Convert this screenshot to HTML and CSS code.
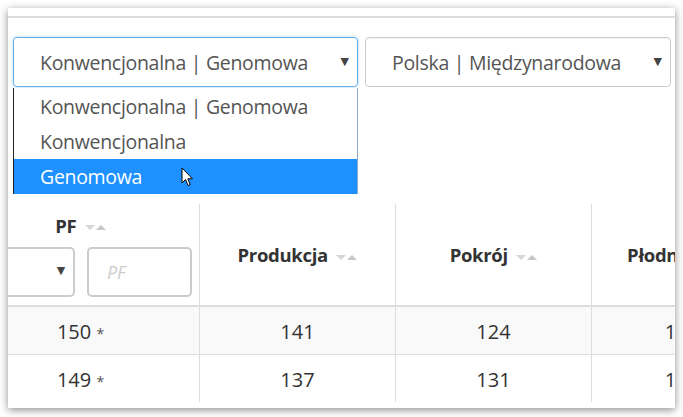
FILE: index.html
```html
<html><head>
<meta charset="UTF-8">
<title>Ranking</title>
<link rel="stylesheet" href="styles.css">
</head>
<body>
  <div class="window">
    <div class="topbar"></div>

    <div class="filters">
      <div class="select focused">
        <span class="select-text">Konwencjonalna | Genomowa</span>
        <span class="caret">&#9660;</span>
      </div>
      <div class="select">
        <span class="select-text">Polska | Międzynarodowa</span>
        <span class="caret">&#9660;</span>
      </div>

      <ul class="dropdown">
        <li>Konwencjonalna | Genomowa</li>
        <li>Konwencjonalna</li>
        <li class="active">Genomowa
          <svg class="cursor" width="13" height="20" viewBox="0 0 13 20">
            <path d="M1 1 L1 16 L4.5 12.5 L7 18.5 L9.2 17.6 L6.8 11.8 L11.5 11.8 Z" fill="#fff" stroke="#000" stroke-width="1" stroke-linejoin="round"/>
          </svg>
        </li>
      </ul>
    </div>

    <div class="table-wrap">
      <table class="ranking">
        <thead>
          <tr>
            <th class="col-pf">
              <div class="th-title">PF <span class="sort"><i class="down"></i><i class="up"></i></span></div>
              <div class="th-filters">
                <div class="mini-select"><span class="caret">&#9660;</span></div>
                <div class="mini-input">PF</div>
              </div>
            </th>
            <th>Produkcja <span class="sort"><i class="down"></i><i class="up"></i></span></th>
            <th>Pokrój <span class="sort"><i class="down"></i><i class="up"></i></span></th>
            <th class="col-narrow">Płodność <span class="sort"><i class="down"></i><i class="up"></i></span></th>
          </tr>
        </thead>
        <tbody>
          <tr class="odd">
            <td class="col-pf">150 <span class="star">*</span></td>
            <td>141</td>
            <td>124</td>
            <td>118</td>
          </tr>
          <tr>
            <td class="col-pf">149 <span class="star">*</span></td>
            <td>137</td>
            <td>131</td>
            <td>112</td>
          </tr>
        </tbody>
      </table>
    </div>
  </div>
</body></html>
```

FILE: styles.css
```css
:root {
  --text-color: #555;
  --head-color: #333;
  --line-color: #ddd;
  --focus-color: #66afe9;
  --active-color: #1e90ff;
}

body {
  margin: 0;
  background: #fff;
  font-family: 'Open Sans', 'DejaVu Sans', sans-serif;
  color: var(--text-color);
}

.window {
  margin: 8px;
  width: 667px;
  height: 400px;
  background: #fff;
  box-shadow: 0 2px 8px rgba(0, 0, 0, 0.45);
  overflow: hidden;
  position: relative;
}

.topbar {
  height: 8px;
  border-bottom: 2px solid #dcdcdc;
}

.filters {
  display: flex;
  gap: 7px;
  padding: 19px 0 0 5px;
  position: relative;
}

.select {
  box-sizing: border-box;
  height: 50px;
  width: 306px;
  border: 1px solid #ccc;
  border-radius: 4px;
  display: flex;
  align-items: center;
  padding: 0 8px 0 26px;
  font-size: 19.5px;
  box-shadow: inset 0 1px 1px rgba(0, 0, 0, 0.05);
}

.select.focused {
  width: 345px;
  border-color: var(--focus-color);
  box-shadow: 0 0 3px rgba(102, 175, 233, 0.6);
}

.select-text {
  flex: 1;
  letter-spacing: -0.3px;
}

.caret {
  font-size: 11px;
  color: #444;
  margin-top: -4px;
}

.dropdown {
  position: absolute;
  top: 70px;
  left: 5px;
  width: 345px;
  box-sizing: border-box;
  margin: 0;
  padding: 1px 0 0;
  list-style: none;
  background: #fff;
  border-left: 1px solid #222;
  border-right: 1px solid #8fa9cf;
  z-index: 10;
  font-size: 19.5px;
}

.dropdown li {
  height: 35px;
  line-height: 35px;
  padding-left: 26px;
  letter-spacing: -0.3px;
  position: relative;
}

.dropdown li.active {
  background: var(--active-color);
  color: #fff;
}

.cursor {
  position: absolute;
  left: 167px;
  top: 8px;
}

.table-wrap {
  margin-top: 117px;
  overflow: hidden;
}

.ranking {
  border-collapse: collapse;
  margin-left: -46px;
  table-layout: fixed;
  width: 807px;
}

.ranking th,
.ranking td {
  width: 195px;
  text-align: center;
  border-left: 1px solid var(--line-color);
  color: var(--head-color);
}

.ranking th:first-child,
.ranking td:first-child {
  border-left: none;
}

.ranking .col-pf {
  width: 237px;
}

.ranking .col-narrow {
  width: 180px;
}

.ranking th {
  height: 102px;
  font-size: 18.5px;
  font-weight: 700;
  letter-spacing: -0.3px;
  border-bottom: 2px solid var(--line-color);
  padding: 0;
  vertical-align: middle;
}

.th-title {
  margin-bottom: 9px;
}

.th-filters {
  display: flex;
  gap: 12px;
}

.mini-select,
.mini-input {
  box-sizing: border-box;
  height: 50px;
  border: 2px solid #ccc;
  border-radius: 5px;
}

.mini-select {
  width: 113px;
  display: flex;
  align-items: center;
  justify-content: flex-end;
  padding-right: 8px;
}

.mini-input {
  width: 105px;
  text-align: left;
  padding-left: 18px;
  line-height: 46px;
  font-weight: 400;
  font-style: italic;
  color: #ccc;
  font-size: 18px;
}

.sort {
  display: inline-flex;
  align-items: center;
  gap: 1px;
  margin-left: 4px;
  vertical-align: middle;
}

.sort i {
  width: 0;
  height: 0;
  border-left: 5px solid transparent;
  border-right: 5px solid transparent;
}

.sort .down {
  border-top: 5px solid #d6d6d6;
}

.sort .up {
  border-bottom: 5px solid #c8c8c8;
}

.ranking td {
  height: 48px;
  font-size: 20px;
  border-top: 1px solid var(--line-color);
  padding: 0 0 0 0;
  line-height: 1.6;
}

.ranking tbody td {
  vertical-align: bottom;
  padding-bottom: 6px;
}

.ranking tbody tr:first-child td {
  border-top: 1px solid #f0f0f0;
}

.ranking tr.odd td {
  background: #f9f9f9;
}

.star {
  font-size: 14px;
  color: #555;
}
```
